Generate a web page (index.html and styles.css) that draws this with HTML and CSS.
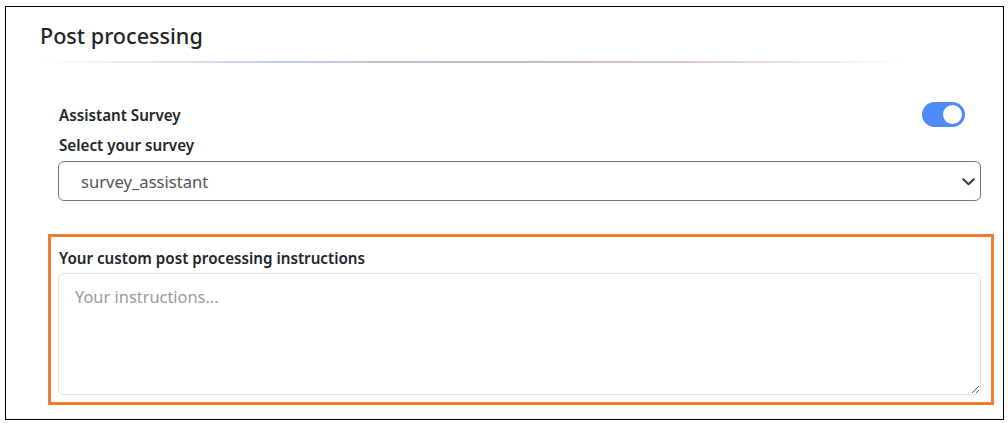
FILE: index.html
```html
<!DOCTYPE html>
<html lang="en">
<head>
<meta charset="utf-8">
<title>Post processing</title>
<link rel="stylesheet" href="styles.css">
</head>
<body>
<div class="frame">
  <h2 class="title">Post processing</h2>
  <div class="divider"></div>
  <div class="content">
    <div class="switch-row">
      <span class="label">Assistant Survey</span>
      <span class="switch" role="switch" aria-checked="true"><span class="knob"></span></span>
    </div>
    <label class="label field-label" for="survey">Select your survey</label>
    <div class="select-wrap">
      <select id="survey" class="select">
        <option>survey_assistant</option>
      </select>
      <svg class="chevron" width="13" height="8" viewBox="0 0 13 8" aria-hidden="true">
        <path d="M1.2 1.2 L6.5 6.3 L11.8 1.2" fill="none" stroke="#3a3a3a" stroke-width="2" stroke-linecap="round" stroke-linejoin="round"/>
      </svg>
    </div>
  </div>
  <div class="highlight">
    <label class="label field-label tight" for="instr">Your custom post processing instructions</label>
    <textarea id="instr" class="textarea" placeholder="Your instructions..."></textarea>
  </div>
</div>
</body>
</html>
```
FILE: styles.css
```css
html, body {
  margin: 0;
  padding: 0;
  background: #fff;
}
body {
  font-family: "Noto Sans", "Open Sans", sans-serif;
  color: #212529;
}
.frame {
  margin: 6px 0 0 5px;
  width: 999px;
  height: 414px;
  box-sizing: border-box;
  border: 1px solid #000;
  padding: 14px 0 0 34px;
}
.title {
  margin: 0;
  font-size: 21.6px;
  line-height: 30px;
  font-weight: 500;
  color: #212529;
}
.divider {
  margin-top: 10px;
  width: 866px;
  height: 2px;
  background: linear-gradient(90deg, rgba(200,205,245,0) 0%, #c3c9f2 28%, #bcbcbc 52%, #e6c6c6 76%, rgba(240,210,210,0) 100%);
}
.content {
  margin: 39px 0 0 18px;
  width: 923px;
}
.switch-row {
  display: flex;
  align-items: center;
  justify-content: space-between;
  height: 25px;
  padding-left: 1px;
}
.label {
  font-size: 15.2px;
  line-height: 20px;
  font-weight: 600;
  color: #212529;
}
.switch {
  width: 43px;
  height: 25px;
  border-radius: 13px;
  background: #4d8bfa;
  margin-right: 16px;
  display: flex;
  align-items: center;
  justify-content: flex-end;
  padding-right: 3px;
  box-sizing: border-box;
}
.knob {
  width: 19px;
  height: 19px;
  border-radius: 50%;
  background: #fff;
}
.field-label {
  display: block;
  margin: 8px 0 6px 1px;
}
.select-wrap {
  position: relative;
  width: 923px;
}
.select {
  display: block;
  width: 923px;
  height: 40px;
  box-sizing: border-box;
  border: 1px solid #767676;
  border-radius: 6px;
  background: #fff;
  font-family: inherit;
  font-size: 16.6px;
  color: #555;
  padding: 0 30px 0 22px;
  -webkit-appearance: none;
  appearance: none;
}
.chevron {
  position: absolute;
  right: 6px;
  top: 17px;
  pointer-events: none;
}
.highlight {
  margin: 33px 0 0 8px;
  width: 946px;
  height: 171px;
  box-sizing: border-box;
  border: 3px solid #ed7d31;
  padding: 11px 0 0 7px;
}
.tight {
  margin: 0 0 5px 1px;
}
.textarea {
  display: block;
  width: 923px;
  height: 122px;
  box-sizing: border-box;
  border: 1px solid #e2e2e2;
  border-radius: 6px;
  font-family: inherit;
  font-size: 16.4px;
  line-height: 22px;
  padding: 12px 16px;
  color: #555;
  resize: vertical;
}
.textarea::placeholder {
  color: #9a9a9a;
}
```
